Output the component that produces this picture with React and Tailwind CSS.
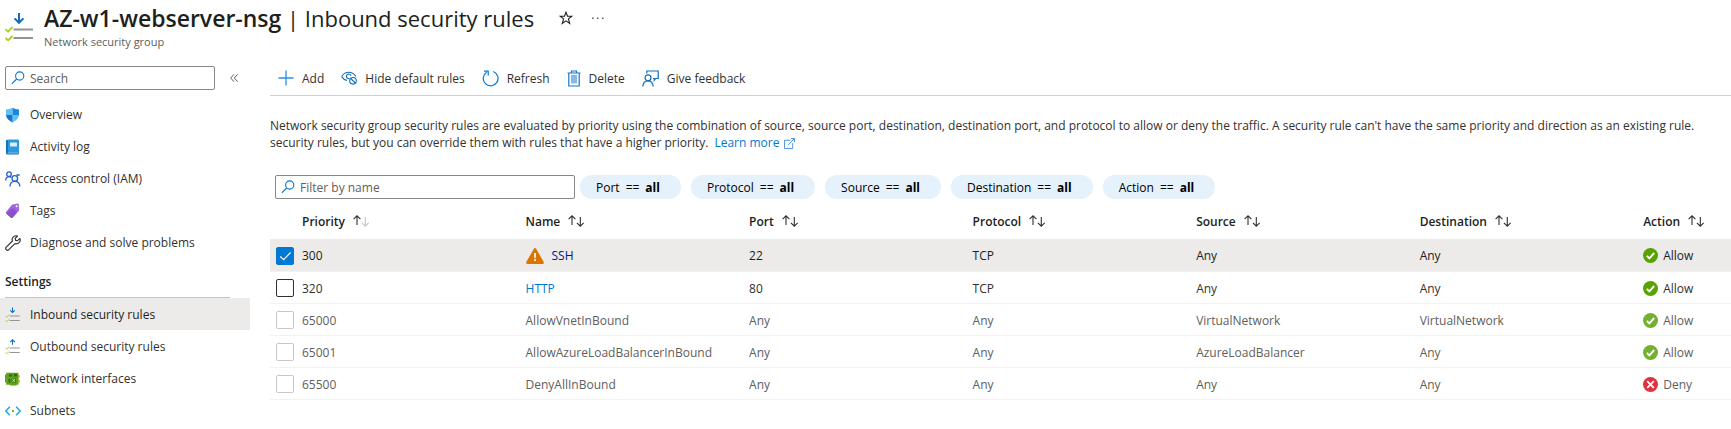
import React from "react";

function RulesIcon({ up = false, className }) {
  return (
    <svg viewBox="0 0 28 29" className={className} fill="none" aria-hidden="true">
      <path
        d={up ? "M14 11V2M9.5 6 14 1.6 18.5 6" : "M14 1v9.4M9.5 6.4 14 10.8 18.5 6.4"}
        stroke="#0f6cbd"
        strokeWidth="2"
      />
      <path d="M.5 17.2l2.6 2.4L7.6 15M.5 26l2.6 2.4L7.6 23.8" stroke="#a8cf1a" strokeWidth="1.8" />
      <path d="M8.5 17.5H28M8.5 26H28" stroke="#949494" strokeWidth="2.2" />
    </svg>
  );
}

function SearchIcon() {
  return (
    <svg viewBox="0 0 14 14" className="size-[14px] shrink-0" fill="none" stroke="#0078d4" strokeWidth="1.1" aria-hidden="true">
      <circle cx="8.7" cy="5" r="4.1" />
      <path d="M5.7 8 .8 12.8" />
    </svg>
  );
}

function ShieldIcon() {
  return (
    <svg viewBox="0 0 15 16" className="h-4 w-[15px]" aria-hidden="true">
      <path d="M7.500.5C5.500 2 3.500 2.300 1 2.400V8h6.500z" fill="#5cc3f5" />
      <path d="M7.500.5C9.500 2 11.500 2.300 14 2.400V8H7.500z" fill="#1b86dd" />
      <path d="M7.500 8H14c-.2 3.700-4 6.300-6.500 7.500z" fill="#5cc3f5" />
      <path d="M1 8h6.500v7.500C5 14.300 1.200 11.700 1 8z" fill="#1474cf" />
    </svg>
  );
}

function LogIcon() {
  return (
    <svg viewBox="0 0 15 16" className="h-4 w-[15px]" aria-hidden="true">
      <rect x="1" y=".8" width="13" height="14.600" rx="1.200" fill="#1272b8" />
      <rect x="3" y=".8" width="11" height="13.200" rx="1" fill="#2f97dc" />
      <rect x="5" y="3.500" width="7" height="4" rx=".5" fill="#d6f0ff" />
      <path d="M2.500 14h11" stroke="#8fd0f7" strokeWidth=".8" />
    </svg>
  );
}

function PeopleIcon() {
  return (
    <svg viewBox="0 0 16 16" className="size-4" fill="none" stroke="#1f5fd0" strokeWidth="1.300" aria-hidden="true">
      <circle cx="4" cy="3.200" r="2.300" />
      <path d="M.7 9.500C.7 7 2 5.600 4 5.600c1 0 1.800.3 2.400 1" />
      <circle cx="9.800" cy="7.400" r="2.800" />
      <path d="M5 15.500c0-3.300 1.900-5.200 4.800-5.200s4.800 1.900 5.200 5.200M11.500 4h3.200" />
    </svg>
  );
}

function TagIcon() {
  return (
    <svg viewBox="0 0 15 16" className="h-4 w-[15px]" aria-hidden="true">
      <path d="M7.600 1.600 12.400.6c.8-.1 1.300.3 1.400 1l.3 5.200c0 .5-.1.8-.4 1.200l-6 6.600c-.5.600-1.200.6-1.800.1L1.300 10.500c-.6-.5-.6-1.200-.1-1.800L6.500 2.200c.3-.3.6-.5 1.100-.6z" fill="#a067dc" />
      <path d="M1.300 10.500 8 5l4 4.500-4.300 5.100c-.5.600-1.200.6-1.800.1z" fill="#8a4fcb" />
      <circle cx="11.600" cy="3.200" r="1" fill="#fff" />
    </svg>
  );
}

function WrenchIcon() {
  return (
    <svg viewBox="0 0 16 16" className="size-4" fill="none" stroke="#3b3a39" strokeWidth="1.200" strokeLinejoin="round" aria-hidden="true">
      <path d="M12.600 1.100A3.900 3.900 0 0 0 7.400 6L1.300 12.200a1.700 1.700 0 0 0 2.500 2.500L10 8.600a3.900 3.900 0 0 0 4.900-5.200l-2.300 2.300-2-.4-.4-2z" />
    </svg>
  );
}

function NicIcon() {
  return (
    <svg viewBox="0 0 15 14" className="h-[14px] w-[15px]" aria-hidden="true">
      <path d="M0 2.500h1.600v8H0z" fill="#7a7a7a" />
      <path d="M13 3h2v3h-2zM13 7.500h2v3h-2z" fill="#f5c518" />
      <path d="M1.200.8h12.300v12h-2v.8H5v-.8H1.200z" fill="#5ea21a" />
      <path d="M4 2.500h3v2H4zM9 2h3v2.500H9zM3.500 7h1.800v3.500H3.500z" fill="#2e6b0b" />
      <path d="M6.500 6.500h4.500v4H6.500z" fill="#3b7a10" />
      <path d="M7.400 7.200l2.600 2.500M10 7.200 7.400 9.700" stroke="#e9f7c9" strokeWidth=".9" />
    </svg>
  );
}

function SubnetIcon() {
  return (
    <svg viewBox="0 0 16 10" className="h-[10px] w-4" fill="none" aria-hidden="true">
      <path d="M4.800.8.900 5l3.900 4.200M11.200.8 15.100 5l-3.900 4.200" stroke="#2aa9e0" strokeWidth="1.600" />
      <circle cx="8" cy="5" r="1.200" fill="#7fba00" />
    </svg>
  );
}

function AddIcon() {
  return (
    <svg viewBox="0 0 16 16" className="size-4" aria-hidden="true">
      <path d="M8 .5v15M.5 8h15" stroke="#2f8fdd" strokeWidth="1.300" />
    </svg>
  );
}

function HideIcon() {
  return (
    <svg viewBox="0 0 16 14" className="h-[14px] w-4" fill="none" stroke="#0f6cbd" strokeWidth="1.100" aria-hidden="true">
      <path d="M.7 5.600C2.200 2.700 4.600 1.200 7.600 1.200c3.200 0 5.800 1.500 7.400 4.400M.7 5.600C1.900 7.600 3.500 8.900 6 9.400" />
      <path d="M8.500 7.500A2.300 2.300 0 1 1 10 4.800" />
      <circle cx="12" cy="9.800" r="3.300" />
      <path d="M9.800 7.500l4.500 4.600" />
    </svg>
  );
}

function RefreshIcon() {
  return (
    <svg viewBox="0 0 17 17" className="size-[17px]" fill="none" stroke="#0078d4" strokeWidth="1.200" aria-hidden="true">
      <path d="M11.300 1.500A7.400 7.400 0 1 1 4.600 2.200" />
      <path d="M2 1.200h4.200v4.200" />
    </svg>
  );
}

function DeleteIcon() {
  return (
    <svg viewBox="0 0 14 17" className="h-[17px] w-[14px]" fill="none" aria-hidden="true">
      <path d="M4 5h6v8.500H4z" fill="#83b9ea" />
      <path d="M.5 3h13M4.500 3V1h5v2M1.800 3v13h10.400V3" stroke="#0f78d4" strokeWidth="1.200" />
    </svg>
  );
}

function FeedbackIcon() {
  return (
    <svg viewBox="0 0 17 17" className="size-[17px]" fill="none" stroke="#0f6cbd" strokeWidth="1.200" aria-hidden="true">
      <path d="M4.800 3.500V1h11.400v7.500h-2.500L12.300 10.300V8.500H11" />
      <circle cx="6" cy="7.800" r="3" />
      <path d="M.8 16.500c.3-3.500 2.300-5.600 5.200-5.600s4.900 2.100 5.200 5.600" />
    </svg>
  );
}

function StarIcon() {
  return (
    <svg viewBox="0 0 14 14" className="size-[14px]" fill="none" stroke="#201f1e" strokeWidth="1.100" aria-hidden="true">
      <path d="M7 1.200l1.500 4h4.400L9.400 7.900l1.300 4.500L7 9.800l-3.700 2.600 1.300-4.500L1.100 5.200h4.400z" />
    </svg>
  );
}

function MoreIcon() {
  return (
    <svg viewBox="0 0 12 2" className="h-[2px] w-3" fill="#605e5c" aria-hidden="true">
      <path d="M0 .5h1.500V2H0zM5 .5h1.500V2H5zM10 .5h1.500V2H10z" />
    </svg>
  );
}

function CollapseIcon() {
  return (
    <svg viewBox="0 0 8 8" className="size-2" fill="none" stroke="#605e5c" aria-hidden="true">
      <path d="M4 .3.700 4 4 7.700M7.600.3 4.300 4l3.300 3.700" />
    </svg>
  );
}

function ExternalIcon() {
  return (
    <svg viewBox="0 0 12 12" className="ml-[5px] inline size-[11px]" fill="none" stroke="#3b8ae0" aria-hidden="true">
      <path d="M7 2.500H.6v8.900h8.900V5.500M4.500 7.500 11.300.7M7.500.6h3.900v3.900" />
    </svg>
  );
}

function SortIcon({ dimDown }) {
  return (
    <svg viewBox="0 0 16 12" className="h-3 w-4 shrink-0" fill="none" stroke="#323130" strokeWidth="1.100" aria-hidden="true">
      <path d="M4 10V.8M.6 4.200 4 .8l3.400 3.400" />
      <path d="M12.300 2v9.200M8.900 7.800l3.400 3.400 3.400-3.400" stroke={dimDown ? "#c8c6c4" : "#323130"} />
    </svg>
  );
}

function WarningIcon() {
  return (
    <svg viewBox="0 0 18 16" className="h-4 w-[18px] shrink-0" aria-hidden="true">
      <path d="M7.900.7c.5-.9 1.700-.9 2.200 0l7.600 13.400c.5.900 0 1.900-1.100 1.900H1.400C.3 16-.2 15 .3 14.100z" fill="#db7500" />
      <path d="M8 5h2l-.3 5.200H8.300zM8.100 11.300h1.800v1.800H8.100z" fill="#fff" />
    </svg>
  );
}

function StatusIcon({ deny, faded }) {
  return (
    <svg viewBox="0 0 15 15" className="size-[15px] shrink-0" fill="none" aria-hidden="true">
      <circle cx="7.500" cy="7.500" r="7.500" fill={deny ? "#e0313f" : faded ? "#75b031" : "#57a300"} />
      {deny ? (
        <path d="M4.200 4.200l6.600 6.600M10.800 4.200l-6.600 6.600" stroke="#fff" strokeWidth="1.900" />
      ) : (
        <path d="M3.800 7.800l2.600 2.600 4.800-5.400" stroke="#fff" strokeWidth="1.900" />
      )}
    </svg>
  );
}

const general = [
  ["Overview", <ShieldIcon />],
  ["Activity log", <LogIcon />],
  ["Access control (IAM)", <PeopleIcon />],
  ["Tags", <TagIcon />],
  ["Diagnose and solve problems", <WrenchIcon />],
];

const settings = [
  ["Inbound security rules", <RulesIcon className="size-[15px]" />],
  ["Outbound security rules", <RulesIcon up className="size-[15px]" />],
  ["Network interfaces", <NicIcon />],
  ["Subnets", <SubnetIcon />],
];

const commands = [
  ["Add", <AddIcon />],
  ["Hide default rules", <HideIcon />],
  ["Refresh", <RefreshIcon />],
  ["Delete", <DeleteIcon />],
  ["Give feedback", <FeedbackIcon />],
];

const filters = ["Port", "Protocol", "Source", "Destination", "Action"];
const columns = ["Priority", "Name", "Port", "Protocol", "Source", "Destination", "Action"];

const rules = [
  { priority: "300", name: "SSH", port: "22", protocol: "TCP", source: "Any", destination: "Any", action: "Allow", selected: true, warn: true },
  { priority: "320", name: "HTTP", port: "80", protocol: "TCP", source: "Any", destination: "Any", action: "Allow" },
  { priority: "65000", name: "AllowVnetInBound", port: "Any", protocol: "Any", source: "VirtualNetwork", destination: "VirtualNetwork", action: "Allow", builtIn: true },
  { priority: "65001", name: "AllowAzureLoadBalancerInBound", port: "Any", protocol: "Any", source: "AzureLoadBalancer", destination: "Any", action: "Allow", builtIn: true },
  { priority: "65500", name: "DenyAllInBound", port: "Any", protocol: "Any", source: "Any", destination: "Any", action: "Deny", builtIn: true },
];

function NavList({ items, current }) {
  return (
    <ul>
      {items.map(([label, icon]) => (
        <li key={label}>
          <a
            href="#"
            aria-current={label === current ? "page" : undefined}
            className={`flex h-8 items-center pt-px pl-[5px] ${label === current ? "bg-[#edebe9] text-[#201f1e]" : ""}`}
          >
            <span className="flex w-[25px] shrink-0">{icon}</span>
            {label}
          </a>
        </li>
      ))}
    </ul>
  );
}

function RuleRow({ rule }) {
  const tone = rule.selected ? "bg-[#edebe9] text-[#201f1e]" : rule.builtIn ? "text-[#605e5c]" : "text-[#323130]";
  const box = rule.builtIn ? "border-[#c8c6c4]" : "border-[#323130] checked:border-[#0078d4] checked:bg-[#0078d4]";
  return (
    <tr className={`h-8 border-b border-[#f3f2f1] *:pt-[2px] ${tone}`}>
      <td className="pl-[6px]">
        <span className="grid size-[18px]">
          <input
            type="checkbox"
            aria-label={`Select rule ${rule.name}`}
            defaultChecked={rule.selected}
            disabled={rule.builtIn}
            className={`peer col-start-1 row-start-1 size-[18px] appearance-none rounded-[2px] border bg-white ${box}`}
          />
          <svg viewBox="0 0 18 18" className="pointer-events-none invisible col-start-1 row-start-1 peer-checked:visible" fill="none" stroke="#fff" strokeWidth="1.100" aria-hidden="true">
            <path d="M4.300 9.500l3.300 3.200 7-7.200" />
          </svg>
        </span>
      </td>
      <td>{rule.priority}</td>
      <td>
        <span className="flex items-center gap-2">
          {rule.warn && <WarningIcon />}
          {rule.builtIn ? (
            rule.name
          ) : (
            <a href="#" className={rule.selected ? "text-[#00188f]" : "text-[#0078d4]"}>{rule.name}</a>
          )}
        </span>
      </td>
      <td>{rule.port}</td>
      <td>{rule.protocol}</td>
      <td>{rule.source}</td>
      <td>{rule.destination}</td>
      <td>
        <span className="flex items-center gap-[5px]">
          <StatusIcon deny={rule.action === "Deny"} faded={rule.builtIn} />
          {rule.action}
        </span>
      </td>
    </tr>
  );
}

export default function App() {
  return (
    <div className="overflow-hidden bg-white font-['Open_Sans','Noto_Sans',sans-serif] text-[12px] leading-[17px] text-[#323130]">
      <header className="flex h-[58px] items-start gap-[11px] pt-[3px] pl-[5px]">
        <RulesIcon className="mt-[9px] h-[29px] w-7 shrink-0" />
        <div>
          <div className="flex items-center">
            <h1 className="text-[22px] leading-[30px] font-normal whitespace-nowrap text-[#201f1e]">
              <strong className="text-[23px] font-semibold">AZ-w1-webserver-nsg</strong> | Inbound security rules
            </h1>
            <button type="button" aria-label="Add to favorites" className="ml-[25px]"><StarIcon /></button>
            <button type="button" aria-label="More actions" className="ml-[19px]"><MoreIcon /></button>
          </div>
          <p className="text-[11px] text-[#605e5c]">Network security group</p>
        </div>
      </header>

      <div className="flex items-start">
        <aside className="w-[250px] shrink-0 pt-2">
          <div className="mb-2 flex items-center gap-[15px] pl-[5px]">
            <label className="flex h-6 w-[210px] items-center gap-[5px] rounded-[2px] border border-[#8a8886] pl-[5px]">
              <SearchIcon />
              <input type="text" aria-label="Search" placeholder="Search" className="min-w-0 flex-1 outline-none placeholder:text-[#605e5c]" />
            </label>
            <button type="button" aria-label="Collapse menu"><CollapseIcon /></button>
          </div>
          <nav>
            <NavList items={general} />
            <h2 className="mr-5 ml-[5px] flex h-10 items-center border-b border-[#c8c6c4] pt-2 font-semibold text-[#201f1e]">Settings</h2>
            <NavList items={settings} current="Inbound security rules" />
          </nav>
        </aside>

        <main className="min-w-0 flex-1 pl-5">
          <div className="flex h-[38px] items-center gap-[17px] border-b border-[#d2d0ce] pt-[3px] pl-2">
            {commands.map(([label, icon]) => (
              <button key={label} type="button" className="flex items-center gap-2 whitespace-nowrap">
                {icon}
                {label}
              </button>
            ))}
          </div>

          <p className="mt-[21px] whitespace-nowrap">
            Network security group security rules are evaluated by priority using the combination of source, source port, destination, destination port, and protocol to allow or deny the traffic. A security rule can't have the same priority and direction as an existing rule.
            <br />
            security rules, but you can override them with rules that have a higher priority.
            <a href="#" className="ml-[6px] text-[#0078d4]">Learn more<ExternalIcon /></a>
          </p>

          <div className="mt-6 flex gap-[10px] pl-[5px]">
            <label className="-mr-[5px] flex h-6 w-[300px] items-center gap-[5px] rounded-[2px] border border-[#8a8886] pl-[5px]">
              <SearchIcon />
              <input type="text" aria-label="Filter by name" placeholder="Filter by name" className="min-w-0 flex-1 outline-none placeholder:text-[#605e5c]" />
            </label>
            {filters.map((name) => (
              <button key={name} type="button" className="flex h-6 items-center gap-[6px] rounded-full bg-[#e5f1fb] pr-[21px] pl-4 whitespace-nowrap text-black">
                {name} <span>==</span> <strong className="font-bold">all</strong>
              </button>
            ))}
          </div>

          <table className="w-full table-fixed border-collapse text-left">
            <colgroup>
              <col className="w-8" />
              <col className="w-[15.3%]" />
              <col className="w-[15.3%]" />
              <col className="w-[15.3%]" />
              <col className="w-[15.3%]" />
              <col className="w-[15.3%]" />
              <col className="w-[15.3%]" />
              <col />
            </colgroup>
            <thead>
              <tr className="h-10 text-[#201f1e]">
                <td />
                {columns.map((name) => (
                  <th key={name} scope="col" className="pt-1 font-semibold">
                    <button type="button" className="flex items-center gap-2">
                      {name}
                      <SortIcon dimDown={name === "Priority"} />
                    </button>
                  </th>
                ))}
              </tr>
            </thead>
            <tbody>
              {rules.map((rule) => (
                <RuleRow key={rule.name} rule={rule} />
              ))}
            </tbody>
          </table>
        </main>
      </div>
    </div>
  );
}
